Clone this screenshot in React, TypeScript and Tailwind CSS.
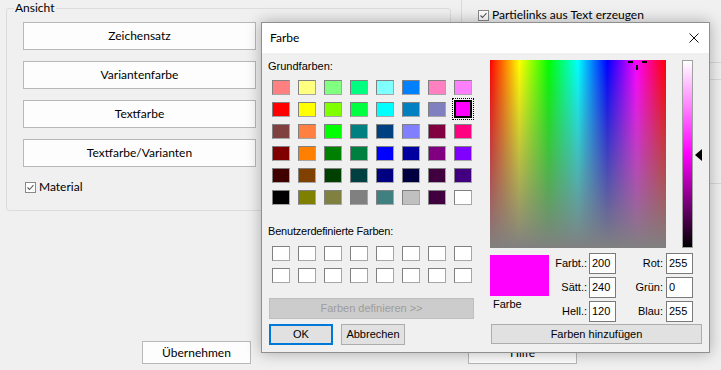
import React from "react";

const seg = "font-['Lato',sans-serif] text-[12px]";
const ms = "font-['Liberation_Sans',Arial,sans-serif] text-[11px]";

// Windows basic colours, row by row
const basicColors = [
  "bg-[#ff8080]", "bg-[#ffff80]", "bg-[#80ff80]", "bg-[#00ff80]", "bg-[#80ffff]", "bg-[#0080ff]", "bg-[#ff80c0]", "bg-[#ff80ff]",
  "bg-[#ff0000]", "bg-[#ffff00]", "bg-[#80ff00]", "bg-[#00ff40]", "bg-[#00ffff]", "bg-[#0080c0]", "bg-[#8080c0]", "bg-[#ff00ff]",
  "bg-[#804040]", "bg-[#ff8040]", "bg-[#00ff00]", "bg-[#008080]", "bg-[#004080]", "bg-[#8080ff]", "bg-[#800040]", "bg-[#ff0080]",
  "bg-[#800000]", "bg-[#ff8000]", "bg-[#008000]", "bg-[#008040]", "bg-[#0000ff]", "bg-[#0000a0]", "bg-[#800080]", "bg-[#8000ff]",
  "bg-[#400000]", "bg-[#804000]", "bg-[#004000]", "bg-[#004040]", "bg-[#000080]", "bg-[#000040]", "bg-[#400040]", "bg-[#400080]",
  "bg-[#000000]", "bg-[#808000]", "bg-[#808040]", "bg-[#808080]", "bg-[#408080]", "bg-[#c0c0c0]", "bg-[#400040]", "bg-[#ffffff]",
];
const SELECTED = 15;

function CheckBox() {
  return (
    <svg width="11" height="11" viewBox="0 0 11 11" className="shrink-0">
      <rect x="0.5" y="0.5" width="10" height="10" fill="#fff" stroke="#8a8a8a" />
      <path d="M2.5 5.5 L4.5 7.5 L8.5 3.2" fill="none" stroke="#5a5a5a" strokeWidth="1.1" />
    </svg>
  );
}

function Swatch({ color, selected }: { color: string; selected?: boolean }) {
  if (selected) {
    return (
      <div className="relative h-[15px] w-[18px]">
        <div className="absolute -left-[2px] -top-[4px] h-[22px] w-[22px] border border-dotted border-black" />
        <div className={`absolute left-0 -top-[2px] h-[18px] w-[18px] border-2 border-black ${color}`} />
      </div>
    );
  }
  return (
    <div
      className={`h-[15px] w-[18px] border border-t-[#808080] border-l-[#808080] border-r-[#a6a6a6] border-b-[#a6a6a6] ${color}`}
    />
  );
}

function Field({ label, value, wide }: { label: string; value: string; wide?: boolean }) {
  return (
    <>
      <div className={`flex h-[21px] items-center justify-end ${wide ? "pr-[3px]" : "pr-[2px]"}`}>{label}</div>
      <div className="flex h-[21px] items-center border border-[#7a7a7a] bg-white pl-[2px]">{value}</div>
    </>
  );
}

function ColorDialog() {
  return (
    <div className="absolute left-[261px] top-[22px] flex h-[331px] w-[449px] flex-col border border-[#8f8f8f] bg-[#f0f0f0] shadow-[0_0_14px_rgba(0,0,0,0.3)]">
      {/* Title bar */}
      <div className="flex h-[30px] items-center justify-between bg-white pl-[8px] pr-[10px]">
        <span className={seg}>Farbe</span>
        <svg width="10" height="10" viewBox="0 0 10 10">
          <path d="M0.5 0.5 L9.5 9.5 M9.5 0.5 L0.5 9.5" stroke="#111" strokeWidth="1" />
        </svg>
      </div>

      <div className={`flex flex-1 pl-[6px] pt-[7px] ${ms}`}>
        {/* Left: swatches */}
        <div className="flex w-[222px] flex-col">
          <div className="h-[13px] leading-[13px]">Grundfarben:</div>
          <div className="ml-[4px] mt-[7px] grid grid-cols-[repeat(8,18px)] gap-x-[8px] gap-y-[7px]">
            {basicColors.map((c, i) => (
              <Swatch key={i} color={c} selected={i === SELECTED} />
            ))}
          </div>
          <div className="mt-[20px] h-[13px] leading-[13px] tracking-[-0.2px]">Benutzerdefinierte Farben:</div>
          <div className="ml-[4px] mt-[8px] grid grid-cols-[repeat(8,18px)] gap-x-[8px] gap-y-[7px]">
            {Array.from({ length: 16 }).map((_, i) => (
              <Swatch key={i} color="bg-white" />
            ))}
          </div>
          <div className="ml-[1px] mt-[15px] flex h-[21px] w-[205px] items-center justify-center border border-[#bfbfbf] bg-[#cccccc] text-[#9d9d9d]">
            Farben definieren &gt;&gt;
          </div>
          <div className="ml-[1px] mt-[5px] flex gap-[8px]">
            <div className="flex h-[21px] w-[64px] items-center justify-center border-2 border-[#0078d7] bg-[#e1e1e1]">OK</div>
            <div className="flex h-[21px] w-[64px] items-center justify-center border border-[#adadad] bg-[#e1e1e1]">Abbrechen</div>
          </div>
        </div>

        {/* Right: spectrum and values */}
        <div className="flex flex-1 flex-col">
          <div className="flex h-[188px]">
            <div className="relative h-[188px] w-[176px] bg-[image:linear-gradient(to_bottom,rgba(128,128,128,0),#808080),linear-gradient(to_right,#f00,#ff0_16.67%,#0f0_33.33%,#0ff_50%,#00f_66.67%,#f0f_83.33%,#f00)]">
              <div className="absolute left-[138px] top-[1px] h-[2px] w-[5px] bg-black" />
              <div className="absolute left-[152px] top-[1px] h-[2px] w-[5px] bg-black" />
              <div className="absolute left-[146px] top-[5px] h-[5px] w-[2px] bg-black" />
            </div>
            <div className="ml-[16px] h-[188px] w-[11px] border border-[#a0a0a0] bg-[image:linear-gradient(to_bottom,#fff,#ff00ff_50%,#000)]" />
            <svg width="7" height="12" viewBox="0 0 7 12" className="ml-[2px] mt-[89px]">
              <polygon points="0,6 7,0 7,12" fill="#000" />
            </svg>
          </div>

          <div className="mt-[5px] flex">
            <div className="w-[59px]">
              <div className="mt-[2px] h-[41px] bg-[#ff00ff]" />
              <div className="mt-[2px] pl-[3px] leading-[13px]">Farbe</div>
            </div>
            <div className="grid grid-cols-[40px_27px_50px_27px] gap-y-[3px]">
              <Field label="Farbt.:" value="200" />
              <Field label="Rot:" value="255" wide />
              <Field label="Sätt.:" value="240" />
              <Field label="Grün:" value="0" wide />
              <Field label="Hell.:" value="120" />
              <Field label="Blau:" value="255" wide />
            </div>
          </div>

          <div className="ml-[1px] mt-[2px] flex h-[20px] w-[211px] items-center justify-center border border-[#adadad] bg-[#e1e1e1]">
            Farben hinzufügen
          </div>
        </div>
      </div>
    </div>
  );
}

export default function App() {
  const btn = "flex h-[28px] w-[233px] items-center justify-center border border-[#b8b8b8] bg-[#fdfdfd]";
  return (
    <div className={`relative h-[370px] w-[721px] overflow-hidden bg-[#f0f0f0] text-black ${seg}`}>
      <div className="flex h-[341px]">
        {/* Ansicht group */}
        <fieldset className="ml-[6px] h-[211px] w-[445px] rounded-[3px] border border-[#dcdcdc]">
          <legend className="ml-[7px] px-[1px] leading-[16px]">Ansicht</legend>
          <div className="flex flex-col gap-[11px] pl-[16px] pt-[6px]">
            <div className={btn}>Zeichensatz</div>
            <div className={btn}>Variantenfarbe</div>
            <div className={btn}>Textfarbe</div>
            <div className={btn}>Textfarbe/Varianten</div>
          </div>
          <div className="ml-[18px] mt-[12px] flex h-[16px] items-center gap-[3px]">
            <CheckBox />
            <span>Material</span>
          </div>
        </fieldset>

        {/* Right column of the settings page */}
        <div className="ml-[10px] flex flex-1 flex-col">
          <div className="flex h-[30px] items-start gap-[3px] border-l border-[#d9d9d9] pl-[16px] pt-[7px]">
            <div className="flex h-[16px] items-center gap-[3px]">
              <CheckBox />
              <span>Partielinks aus Text erzeugen</span>
            </div>
          </div>
          <div className="ml-[20px] mt-[32px] h-[17px] border-t border-[#d9d9d9]" />
          <div className="ml-[20px] h-[104px] border-t border-[#d9d9d9]" />
          <div className="ml-[20px] border-t border-[#d9d9d9]" />
        </div>
      </div>

      <div className="flex pl-[142px]">
        <div className="flex h-[23px] w-[109px] items-center justify-center border border-[#b8b8b8] bg-[#fdfdfd]">Übernehmen</div>
        <div className="ml-[217px] flex h-[23px] w-[109px] items-center justify-center border border-[#b8b8b8] bg-[#fdfdfd]">Hilfe</div>
      </div>

      <ColorDialog />
    </div>
  );
}
